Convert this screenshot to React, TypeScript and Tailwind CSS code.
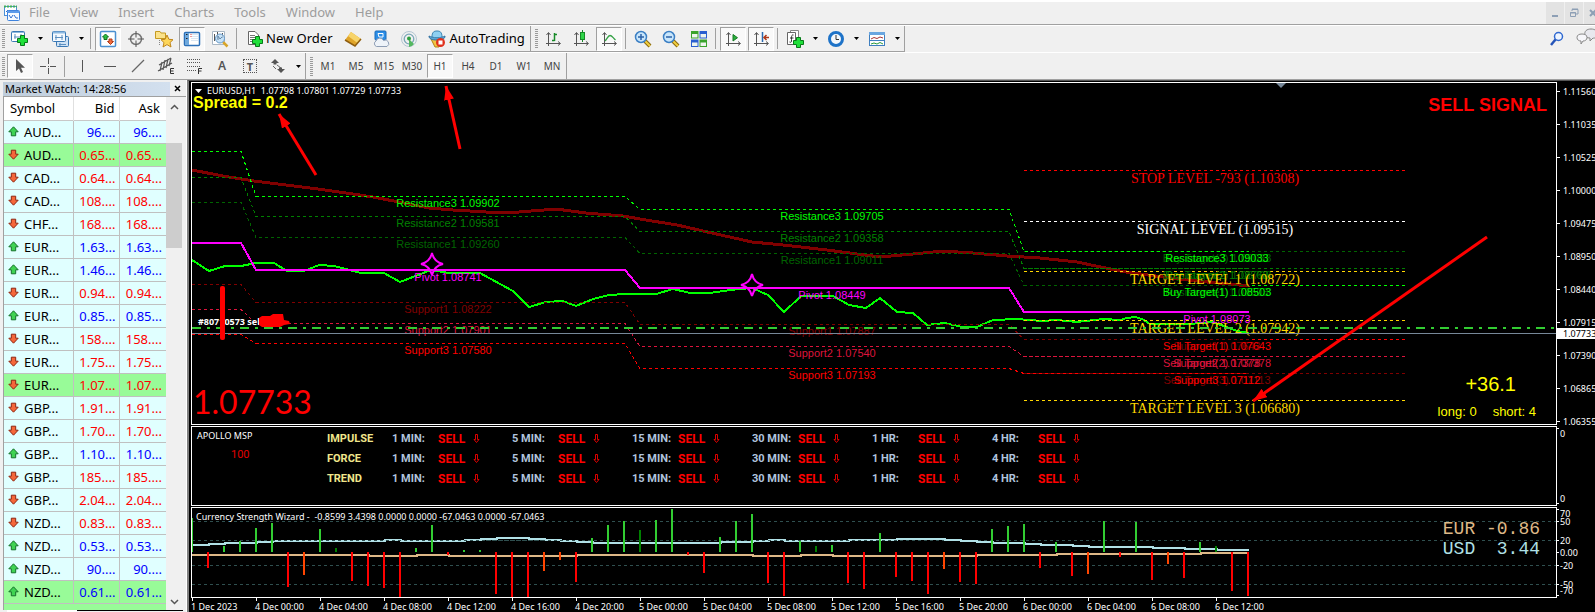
import type { ReactNode } from "react";

type Point = [number, number];

const menuItems = ["File", "View", "Insert", "Charts", "Tools", "Window", "Help"];
const timeframes = ["M1", "M5", "M15", "M30", "H1", "H4", "D1", "W1", "MN"];

type Quote = { symbol: string; bid: string; up?: boolean; marked?: boolean };

const quotes: Quote[] = [
  { symbol: "AUD...", bid: "96....", up: true },
  { symbol: "AUD...", bid: "0.65...", marked: true },
  { symbol: "CAD...", bid: "0.64..." },
  { symbol: "CAD...", bid: "108...." },
  { symbol: "CHF...", bid: "168...." },
  { symbol: "EUR...", bid: "1.63...", up: true },
  { symbol: "EUR...", bid: "1.46...", up: true },
  { symbol: "EUR...", bid: "0.94..." },
  { symbol: "EUR...", bid: "0.85...", up: true },
  { symbol: "EUR...", bid: "158...." },
  { symbol: "EUR...", bid: "1.75..." },
  { symbol: "EUR...", bid: "1.07...", marked: true },
  { symbol: "GBP...", bid: "1.91..." },
  { symbol: "GBP...", bid: "1.70..." },
  { symbol: "GBP...", bid: "1.10...", up: true },
  { symbol: "GBP...", bid: "185...." },
  { symbol: "GBP...", bid: "2.04..." },
  { symbol: "NZD...", bid: "0.83..." },
  { symbol: "NZD...", bid: "0.53...", up: true },
  { symbol: "NZD...", bid: "90....", up: true },
  { symbol: "NZD...", bid: "0.61...", up: true, marked: true },
];

const times = [
  "1 Dec 2023", "4 Dec 00:00", "4 Dec 04:00", "4 Dec 08:00", "4 Dec 12:00", "4 Dec 16:00",
  "4 Dec 20:00", "5 Dec 00:00", "5 Dec 04:00", "5 Dec 08:00", "5 Dec 12:00", "5 Dec 16:00",
  "5 Dec 20:00", "6 Dec 00:00", "6 Dec 04:00", "6 Dec 08:00", "6 Dec 12:00",
];

const prices = [
  "1.11560", "1.11035", "1.10525", "1.10000", "1.09475", "1.08950",
  "1.08440", "1.07915", "1.07390", "1.06865", "1.06355",
];

// y of each daily level for the four sessions on screen
const dailyLevels = [
  { color: "#800000", ys: [201, 219, 241, 256] },
  { color: "#dc143c", ys: [226, 240, 263, 273] },
  { color: "#ff0000", ys: [251, 260, 285, 290] },
  { color: "#006400", ys: [119, 154, 170, 202] },
  { color: "#008000", ys: [94, 133, 148, 185] },
  { color: "#00ff00", ys: [68, 113, 126, 168] },
];

const signalLevels = [
  { y: 87, color: "#ff0000" },
  { y: 138, color: "#ffffff" },
  { y: 168, color: "#006400" },
  { y: 185, color: "#008000" },
  { y: 188, color: "#ffd700" },
  { y: 202, color: "#00ff00" },
  { y: 237, color: "#ffd700" },
  { y: 256, color: "#ff0000" },
  { y: 273, color: "#dc143c" },
  { y: 290, color: "#800000" },
  { y: 317, color: "#ffd700" },
];

const levelLabels: Array<[number, number, string, string]> = [
  [256, 124, "Resistance3 1.09902", "#00ff00"],
  [256, 144, "Resistance2 1.09581", "#008000"],
  [256, 165, "Resistance1 1.09260", "#006400"],
  [256, 198, "Pivot 1.08741", "#ff00ff"],
  [256, 230, "Support1 1.08222", "#800000"],
  [256, 251, "Support2 1.07901", "#dc143c"],
  [256, 271, "Support3 1.07580", "#ff0000"],
  [640, 137, "Resistance3 1.09705", "#00ff00"],
  [640, 159, "Resistance2 1.09358", "#008000"],
  [640, 181, "Resistance1 1.09011", "#006400"],
  [640, 216, "Pivot 1.08449", "#ff00ff"],
  [640, 252, "Support1 1.07887", "#800000"],
  [640, 274, "Support2 1.07540", "#dc143c"],
  [640, 296, "Support3 1.07193", "#ff0000"],
  [1025, 179, "Buy Target(3) 1.09033", "#006400"],
  [1025, 179, "Resistance3 1.09033", "#00ff00"],
  [1025, 196, "Buy Target(2) 1.08768", "#006400"],
  [1025, 196, "Resistance2 1.08768", "#008000"],
  [1025, 213, "Resistance1 1.08503", "#006400"],
  [1025, 213, "Buy Target(1) 1.08503", "#00ff00"],
  [1025, 240, "Pivot 1.08073", "#ff00ff"],
  [1025, 267, "Support1 1.07643", "#800000"],
  [1025, 267, "Sell Target(1) 1.07643", "#ff0000"],
  [1025, 284, "Sell Target(2) 1.07378", "#dc143c"],
  [1025, 284, "Support2 1.07378", "#dc143c"],
  [1025, 301, "Sell Target(3) 1.07113", "#800000"],
  [1025, 301, "Support3 1.07112", "#ff0000"],
];

const serifLabels: Array<[number, string, string]> = [
  [100, "STOP LEVEL -793 (1.10308)", "#ff0000"],
  [151, "SIGNAL LEVEL (1.09515)", "#ffffff"],
  [201, "TARGET LEVEL 1 (1.08722)", "#ffd700"],
  [250, "TARGET LEVEL 2 (1.07942)", "#ffd700"],
  [330, "TARGET LEVEL 3 (1.06680)", "#ffd700"],
];

const slowAverage: Point[] = [
  [0, 87], [31, 93], [62, 98], [94, 102], [126, 106], [154, 110], [181, 114], [207, 119],
  [237, 125], [261, 127], [294, 129], [327, 129], [364, 126], [394, 130], [431, 133], [448, 136],
  [485, 142], [511, 148], [560, 159], [591, 162], [635, 167], [688, 174], [721, 171], [751, 168],
  [781, 170], [815, 173], [848, 175], [885, 179], [928, 188], [941, 190], [971, 194], [1005, 198],
  [1057, 203],
];

const fastLine: Point[] = [
  [0, 177], [17, 188], [33, 183], [49, 183], [64, 180], [82, 180], [95, 188], [112, 188],
  [127, 182], [142, 183], [169, 190], [192, 190], [208, 199], [239, 187], [257, 190], [288, 190],
  [321, 208], [337, 224], [354, 219], [371, 218], [384, 223], [401, 216], [417, 212], [434, 211],
  [464, 211], [481, 206], [498, 210], [518, 210], [538, 207], [560, 205], [576, 212], [592, 229],
  [609, 213], [641, 213], [657, 222], [674, 225], [688, 215], [705, 229], [721, 230], [735, 242],
  [753, 240], [770, 244], [785, 244], [801, 237], [825, 236], [850, 238], [865, 237], [885, 239],
  [911, 236], [928, 237], [935, 235], [943, 234], [950, 236], [958, 241], [998, 241], [1020, 239],
  [1032, 243], [1045, 248], [1057, 250],
];

const pivotLine: Point[] = [
  [0, 160], [49, 160], [64, 187], [433, 187], [448, 205], [817, 205], [832, 229], [1057, 229],
];

// [bar index, height, weak]
const upBars: Array<[number, number, boolean?]> = [
  [0, 34], [2, 6], [3, 11], [4, 24], [5, 29], [8, 23], [9, 4, true], [14, 4], [15, 27], [17, 2],
  [18, 2], [25, 14], [26, 27], [27, 31], [28, 22, true], [29, 32], [30, 43], [33, 15], [34, 31],
  [35, 38], [38, 11], [39, 6, true], [40, 7], [43, 19], [50, 23], [51, 26], [52, 28], [54, 10],
  [57, 31], [59, 30], [63, 10], [64, 6, true],
];

const downBars: Array<[number, number, boolean?]> = [
  [1, 16], [6, 35], [7, 23, true], [10, 29], [11, 34], [12, 36], [13, 45], [16, 3], [19, 42],
  [20, 45], [21, 45], [22, 19, true], [23, 8, true], [24, 30], [31, 3], [32, 21], [36, 31],
  [37, 44], [41, 31], [42, 37], [44, 25], [45, 29], [46, 42], [47, 17, true], [48, 30], [49, 32],
  [53, 16], [55, 24], [56, 22, true], [58, 5], [60, 28], [61, 12, true], [62, 26], [65, 39],
  [66, 44],
];

const usdSteps: Point[] = [
  [0, 37], [1, 36], [2, 35], [4, 34], [5, 33], [12, 32], [13, 33], [17, 32], [18, 31], [19, 30],
  [21, 31], [22, 32], [23, 33], [24, 34], [25, 35], [33, 34], [35, 33], [36, 32], [37, 33],
  [41, 32], [44, 31], [47, 32], [48, 33], [49, 34], [50, 35], [52, 36], [53, 37], [55, 38],
  [56, 39], [60, 40], [62, 41], [64, 42],
];

const eurSteps: Point[] = [
  [0, 47], [11, 48], [14, 47], [16, 48], [24, 47], [35, 48], [38, 47], [40, 48], [49, 47],
  [54, 46], [63, 45],
];

function toPoints(points: Point[]) {
  return points.map((p) => p.join(",")).join(" ");
}

function stepPath(steps: Point[]) {
  return steps
    .map(([bar, y], i) => `${i === 0 ? "M" : "V"}${i === 0 ? `${bar * 16},${y}` : y} H${(steps[i + 1]?.[0] ?? 66) * 16 + 1}`)
    .join(" ");
}

function Icon({ children, size = 18 }: { children: ReactNode; size?: number }) {
  return (
    <svg width={size} height={size} viewBox={`0 0 ${size} ${size}`} fill="none" className="shrink-0" aria-hidden="true">
      {children}
    </svg>
  );
}

function ToolButton({ label, pressed, children }: { label: string; pressed?: boolean; children: ReactNode }) {
  return (
    <button
      type="button"
      aria-label={label}
      aria-pressed={pressed}
      className={`mx-px flex h-6 w-[26px] shrink-0 items-center justify-center border ${
        pressed ? "border-t-[#a0a0a0] border-r-white border-b-white border-l-[#a0a0a0] bg-[#f9f9f9]" : "border-transparent"
      }`}
    >
      {children}
    </button>
  );
}

function DropArrow({ label }: { label: string }) {
  return (
    <button type="button" aria-label={label} className="flex h-6 w-[13px] shrink-0 items-center justify-center">
      <svg width="5" height="3" aria-hidden="true">
        <path d="M0 0H5L2.5 3Z" fill="#000" />
      </svg>
    </button>
  );
}

function Separator() {
  return <span className="mr-[3px] ml-[2px] h-[21px] w-px shrink-0 bg-[#a0a0a0]" />;
}

function Grip() {
  return (
    <svg width="3" height="19" className="mr-px ml-[2px] shrink-0" shapeRendering="crispEdges" aria-hidden="true">
      <path d="M1.5 0V19" stroke="#9a9a9a" strokeWidth="3" strokeDasharray="1 1" />
    </svg>
  );
}

function Plus({ x, y }: { x: number; y: number }) {
  return (
    <path
      transform={`translate(${x} ${y})`}
      d="M3.5 .5H7.5V3.5H10.5V7.5H7.5V10.5H3.5V7.5H.5V3.5H3.5Z"
      fill="#1fe03a"
      stroke="#067a18"
    />
  );
}

function Axes() {
  return <path d="M4.5 16V3M2.5 5L4.5 2.5L6.5 5M2 13.5H16M14 11.5L16.5 13.5L14 15.5" stroke="#555" />;
}

function Lens({ minus }: { minus?: boolean }) {
  return (
    <Icon>
      <path d="M11 11L16 16" stroke="#8a6a10" strokeWidth="4" />
      <path d="M11 11L16 16" stroke="#f3cf3f" strokeWidth="2" />
      <circle cx="7" cy="7" r="5.5" fill="#c9e6fb" stroke="#3b7fc4" strokeWidth="1.5" />
      <path d={minus ? "M4 7H10" : "M4 7H10M7 4V10"} stroke="#2b62a8" strokeWidth="1.5" />
    </Icon>
  );
}

function QuoteArrow({ up }: { up?: boolean }) {
  return (
    <svg width="11" height="11" viewBox="0 0 11 11" className="shrink-0" role="img" aria-label={up ? "up" : "down"}>
      {up ? (
        <path d="M5.5 .8L10.2 5.8H7.7V9.8H3.3V5.8H.8Z" fill="#3fd353" stroke="#14702a" />
      ) : (
        <path d="M5.5 10.2L.8 5.2H3.3V1.2H7.7V5.2H10.2Z" fill="#f5673a" stroke="#8e2510" />
      )}
    </svg>
  );
}

function MenuBar() {
  return (
    <header className="flex h-6 shrink-0 border-t-2 border-white">
      <div className="flex w-7 items-center justify-center pr-1">
        <Icon size={16}>
          <rect x=".5" y="1.5" width="12" height="9" fill="#fff" stroke="#4a8fd8" />
          <path d="M0 1.5H13" stroke="#43b058" strokeWidth="2" strokeDasharray="2 1" />
          <path d="M2 7L4 5L6 7L8 5L10 7" stroke="#2f6fd0" />
          <rect x="3.5" y="5.5" width="12" height="10" rx="1" fill="#f5faff" stroke="#3f83dd" />
          <path d="M4 7H15" stroke="#5c9bea" strokeWidth="2" />
          <path d="M5 10L7 13L9 10M10 10L12 13H14" stroke="#2f6fd0" />
        </Icon>
      </div>
      <nav className="flex flex-1 items-center gap-5 pl-px text-[13px] text-[#9d9d9d]">
        {menuItems.map((item) => (
          <button key={item} type="button">
            {item}
          </button>
        ))}
      </nav>
      <div className="flex gap-px text-[#8d9fb5]">
        <button type="button" aria-label="Minimize" className="flex w-[18px] items-center justify-center bg-[#e3e3e3]">
          <Icon size={10}>
            <path d="M2 8H8" stroke="currentColor" strokeWidth="2" />
          </Icon>
        </button>
        <button type="button" aria-label="Restore" className="flex w-[18px] items-center justify-center bg-[#e3e3e3]">
          <Icon size={10}>
            <path d="M3 3V1.5H9V6H7M3 1H9M1.5 4.5H6.5V8.5H1.5ZM1 5H7" stroke="currentColor" />
          </Icon>
        </button>
        <button type="button" aria-label="Close" className="flex w-[11px] items-center overflow-hidden bg-[#e3e3e3] pl-1">
          <Icon size={10}>
            <path d="M2 2L8 8M8 2L2 8" stroke="currentColor" strokeWidth="2" />
          </Icon>
        </button>
      </div>
    </header>
  );
}

function StandardToolbar() {
  return (
    <div className="flex h-[26px] shrink-0 items-center">
      <div className="flex h-full items-center border-r border-b border-[#a0a0a0]">
        <Grip />
        <ToolButton label="New chart">
          <Icon>
            <rect x=".5" y="1.5" width="13" height="10" rx="1" fill="#fff" stroke="#3a78b4" />
            <path d="M1 2.5H13" stroke="#8cb8e0" />
            <path d="M3 7H11M4 4V9M10 4V9" stroke="#5d8fc0" />
            <Plus x={6} y={5} />
          </Icon>
        </ToolButton>
        <DropArrow label="New chart options" />
        <ToolButton label="Profiles">
          <Icon>
            <rect x="4.5" y="6.5" width="12" height="10" rx="1" fill="#cfe2f4" stroke="#3a78b4" />
            <path d="M7 14.5H14M8 13V16" stroke="#5d8fc0" />
            <rect x=".5" y="1.5" width="13" height="10" rx="1" fill="#f4f9fe" stroke="#3a78b4" />
            <path d="M1 2.5H13" stroke="#8cb8e0" strokeWidth="2" />
            <path d="M3 7.5H11M4 5V10M10 5V10" stroke="#5d8fc0" />
          </Icon>
        </ToolButton>
        <DropArrow label="Profile list" />
        <Separator />
        <ToolButton label="Market Watch" pressed>
          <Icon>
            <rect x="1.5" y="1.5" width="15" height="15" rx="1" fill="#fff" stroke="#4a90d0" strokeWidth="1.5" />
            <path d="M6.500 4L9.500 7H8V9.500H5V7H3.500Z" fill="#2cc040" stroke="#11701f" />
            <path d="M11.500 14.500L8.500 11.500H10V9H13V11.500H14.500Z" fill="#f06a3c" stroke="#b03a18" />
          </Icon>
        </ToolButton>
        <ToolButton label="Data Window">
          <Icon>
            <circle cx="9" cy="9" r="5.5" stroke="#777" strokeWidth="1.5" />
            <path d="M9 1V7.5M9 10.5V17M1 9H7.5M10.500 9H17" stroke="#555" />
          </Icon>
        </ToolButton>
        <ToolButton label="Navigator">
          <Icon>
            <path d="M.5 1.5H5L6 3H10.5V8.5H.5Z" fill="#fbe28a" stroke="#c59a22" />
            <path d="M4.5 10V16" stroke="#888" strokeDasharray="1 1" />
            <path d="M12 5L13.9 9.3L18 9.700L15 12.600L16 17L12 14.600L8 17L9 12.600L6 9.700L10.100 9.300Z" fill="#fdd65a" stroke="#c0861a" />
          </Icon>
        </ToolButton>
        <ToolButton label="Terminal" pressed>
          <Icon>
            <rect x="1.5" y="2.5" width="15" height="13" rx="1" fill="#fff" stroke="#2b6fb8" strokeWidth="1.5" />
            <rect x="2" y="3" width="4" height="12" fill="#6fa8dc" />
            <path d="M3 4.500H4.500M3 8.500H4.500" stroke="#222" />
            <path d="M7.500 4.500H8.500M7.500 6.500H8.500" stroke="#d33" />
            <path d="M9 4.500H15M9 6.500H15M8 8.500H15M8 10.500H15" stroke="#d9e6f2" />
          </Icon>
        </ToolButton>
        <ToolButton label="Strategy Tester">
          <Icon>
            <path d="M1.500 1.500H13.500V14.500H1.500Z" fill="#fff" stroke="#a9b7c4" />
            <path d="M3.500 4V11M6.500 2V9M11.500 3V8" stroke="#555" />
            <path d="M12 12L16.500 16.500" stroke="#d8a52a" strokeWidth="2.500" />
            <circle cx="9" cy="8.500" r="4.500" fill="#b9dbf5" fillOpacity=".8" stroke="#6698c6" />
            <path d="M7 10V6L9 9L11 7" stroke="#6688a8" />
          </Icon>
        </ToolButton>
        <Separator />
        <button type="button" className="flex h-6 items-center gap-[3px] pr-1.5 pl-[7px] text-[13px] whitespace-nowrap text-black">
          <Icon size={16}>
            <path d="M1.500 .5H8L11.500 4V13.500H1.500Z" fill="#fff" stroke="#666" />
            <path d="M3 4.500H8M3 6.500H9M3 8.500H9M3 10.500H7" stroke="#777" />
            <Plus x={5} y={5} />
          </Icon>
          New Order
        </button>
        <ToolButton label="MetaEditor">
          <Icon>
            <path d="M1 10L7 2L17 9L11 16Z" fill="#e0a52a" />
            <path d="M7 2L17 9L13.500 13L4 6Z" fill="#f7d46a" />
            <path d="M1 10L11 16L17 9" stroke="#8f5e10" strokeWidth="1.500" />
          </Icon>
        </ToolButton>
        <ToolButton label="Cloud">
          <Icon>
            <rect x="3" y="1" width="11" height="9" rx="1" fill="#2a8ee8" stroke="#1a6ab8" />
            <path d="M6 3.500H11V7H7Z" stroke="#fff" />
            <path d="M4.500 16.500A3 3 0 0 1 4 11A4 4 0 0 1 11.500 10.500A3 3 0 0 1 15 16.500Z" fill="#eef3f9" stroke="#8d9db5" />
          </Icon>
        </ToolButton>
        <ToolButton label="Signals">
          <Icon>
            <circle cx="9" cy="9" r="7.500" stroke="#b4c6d2" />
            <circle cx="9" cy="9" r="4.800" stroke="#7aa6b8" strokeWidth="1.300" />
            <path d="M9 9V17A8 8 0 0 0 14 14Z" fill="#55b860" />
            <circle cx="9" cy="8.500" r="2" fill="#2fa040" />
          </Icon>
        </ToolButton>
        <button type="button" className="flex h-6 items-center gap-1 pr-[5px] pl-[5px] text-[13px] whitespace-nowrap text-black">
          <Icon>
            <path d="M3 9H14L11 17H7Z" fill="#f3c440" stroke="#b0831a" />
            <path d="M1 6C1 9 4 10 9 10S17 9 17 6C14 8 4 8 1 6Z" fill="#5fa8d8" stroke="#2f6fa0" />
            <path d="M4 7C4 2 6 1 9 1S14 2 14 7C11 8 7 8 4 7Z" fill="#8fd0f2" stroke="#3c86b4" />
            <circle cx="12.500" cy="12.500" r="4.500" fill="#e0301c" />
            <rect x="10.500" y="10.500" width="4" height="4" fill="#fff" />
          </Icon>
          AutoTrading
        </button>
      </div>
      <div className="flex h-full items-center border-r border-b border-[#a0a0a0] pl-0.5">
        <Grip />
        <ToolButton label="Bar chart">
          <Icon>
            <Axes />
            <path d="M10.500 3V11M10.500 4.500H13M8 10.500H10.500" stroke="#178a28" strokeWidth="1.500" />
          </Icon>
        </ToolButton>
        <ToolButton label="Candlesticks">
          <Icon>
            <Axes />
            <path d="M10.500 0V12" stroke="#178a28" />
            <rect x="8.500" y="2.500" width="4" height="7" fill="#2fd648" stroke="#178a28" />
          </Icon>
        </ToolButton>
        <ToolButton label="Line chart" pressed>
          <Icon>
            <Axes />
            <path d="M5 11C7 9 8 5.500 10 5.500S13 8 15.500 10" stroke="#36a246" strokeWidth="1.300" />
          </Icon>
        </ToolButton>
        <Separator />
        <ToolButton label="Zoom in">
          <Lens />
        </ToolButton>
        <ToolButton label="Zoom out">
          <Lens minus />
        </ToolButton>
        <ToolButton label="Tile windows">
          <Icon>
            <path d="M1 1H8.500V8.500H1ZM9.500 9.500H17V17H9.500Z" fill="#3aa32c" />
            <path d="M9.500 1H17V8.500H9.500ZM1 9.500H8.500V17H1Z" fill="#2a5fd0" />
            <path d="M2 4H7.500V7.500H2ZM10.500 4H16V7.500H10.500ZM2 12.500H7.500V16H2ZM10.500 12.500H16V16H10.500Z" fill="#eef5ee" />
          </Icon>
        </ToolButton>
        <Separator />
        <ToolButton label="Auto scroll" pressed>
          <Icon>
            <Axes />
            <path d="M9 4.500V11L13.500 7.700Z" fill="#2bb03c" stroke="#157a24" />
          </Icon>
        </ToolButton>
        <ToolButton label="Chart shift" pressed>
          <Icon>
            <Axes />
            <path d="M10.500 2V12" stroke="#2a6ab0" strokeWidth="1.500" />
            <path d="M17 7.500H12M14.500 5L12 7.500L14.500 10" stroke="#b03a1a" strokeWidth="1.500" />
          </Icon>
        </ToolButton>
        <Separator />
        <ToolButton label="Indicators">
          <Icon>
            <path d="M4.500 .5H12.500V12.500H4.500Z" fill="#fff" stroke="#888" />
            <path d="M1.500 2.500H9.500V14.500H1.500Z" fill="#fff" stroke="#666" />
            <path d="M7.500 5C5.500 4.500 5.500 6 5.500 11C5.500 12.500 4.500 12.500 3.500 12M4 8H7.500" stroke="#333" />
            <Plus x={7} y={7} />
          </Icon>
        </ToolButton>
        <DropArrow label="Indicator list" />
        <ToolButton label="Periods">
          <Icon>
            <circle cx="9" cy="9" r="6.500" fill="#f4f8fc" stroke="#1e73c8" strokeWidth="3" />
            <path d="M9 5V9.500H12" stroke="#333" />
          </Icon>
        </ToolButton>
        <DropArrow label="Period list" />
        <ToolButton label="Templates">
          <Icon>
            <rect x="1.500" y="2.500" width="15" height="13" fill="#fff" stroke="#3f7fc0" />
            <path d="M1 3.500H17" stroke="#6aa6e0" strokeWidth="3" />
            <path d="M3 9L6 7.500L9 8.500L12 7L15 8" stroke="#a33" />
            <path d="M1 10.500H17" stroke="#3f7fc0" />
            <path d="M3 14L6 13L9 14L12 12.500L15 14" stroke="#2a9a3a" />
          </Icon>
        </ToolButton>
        <DropArrow label="Template list" />
      </div>
      <div className="ml-auto flex items-center gap-3">
        <button type="button" aria-label="Search">
          <Icon size={16}>
            <circle cx="10.500" cy="5.500" r="4" fill="#eef5ff" stroke="#2f68d0" strokeWidth="1.500" />
            <path d="M7.500 8.500L3 14" stroke="#2554b8" strokeWidth="2.500" />
          </Icon>
        </button>
        <button type="button" aria-label="Chat" className="w-[19px] overflow-hidden">
          <Icon size={22}>
            <path d="M9 7C8 3 11 1 15 1S22 3 21 7S17 10 17 10L14 13V10C11 10 9 9 9 7Z" fill="#e8e8ee" stroke="#888" />
            <path d="M1 9.500C1 7 3 6 6 6S11 7 11 9.500S9 13 7 13L5 16V13C3 13 1 12 1 9.500Z" fill="#f6f6fa" stroke="#888" />
          </Icon>
        </button>
      </div>
    </div>
  );
}

function LineToolbar() {
  return (
    <div className="flex h-[27px] shrink-0 items-center border-t border-white">
      <div className="flex h-full items-center border-r border-[#a0a0a0]">
        <Grip />
        <ToolButton label="Cursor" pressed>
          <Icon>
            <path d="M5 2V14L8 11.500L10 16L12 15L10 10.700H14Z" fill="#555" />
          </Icon>
        </ToolButton>
        <ToolButton label="Crosshair">
          <Icon>
            <path d="M9.500 1V7M9.500 11V17M1 9.500H7M11 9.500H17M9 9.500H10" stroke="#555" />
          </Icon>
        </ToolButton>
        <Separator />
        <ToolButton label="Vertical line">
          <Icon>
            <path d="M9.500 3V15" stroke="#555" />
          </Icon>
        </ToolButton>
        <ToolButton label="Horizontal line">
          <Icon>
            <path d="M3 9.500H15" stroke="#555" />
          </Icon>
        </ToolButton>
        <ToolButton label="Trendline">
          <Icon>
            <path d="M3 15L15 3" stroke="#666" strokeWidth="1.200" />
          </Icon>
        </ToolButton>
        <ToolButton label="Equidistant channel">
          <Icon>
            <path d="M2 8L14 1M1 14L15 6M5 5L3 14M8 3L6 13M11 2L9 11M14 1L12 9" stroke="#555" strokeWidth="1.200" />
            <path d="M17 11.500H13.500V16.500H17M13.500 14H16.500" stroke="#333" />
          </Icon>
        </ToolButton>
        <ToolButton label="Fibonacci">
          <Icon>
            <path d="M2 2.500H16M2 5.500H16M2 9.500H16M2 13.500H11" stroke="#555" strokeDasharray="1 1" />
            <path d="M17 11.500H13.500V17M13.500 14H16.500" stroke="#333" />
          </Icon>
        </ToolButton>
        <ToolButton label="Text">
          <span className="text-[12px] leading-none font-semibold text-[#555]">A</span>
        </ToolButton>
        <ToolButton label="Text label">
          <span className="flex h-[14px] w-[14px] items-center justify-center border border-dotted border-[#555] text-[11px] leading-none font-bold text-[#555]">
            T
          </span>
        </ToolButton>
        <ToolButton label="Arrows">
          <Icon>
            <path d="M2 6L6 2L10 6H7.500V7.500H4.500V6Z M8 12H10V10.500H13V12H16L12 16Z" fill="#555" />
            <path d="M4 9L7 12M8 8L12 11" stroke="#666" />
          </Icon>
        </ToolButton>
        <DropArrow label="Arrow list" />
      </div>
      <div className="flex h-full items-center border-r border-[#a0a0a0] pl-0.5">
        <Grip />
        <div className="flex text-[10px] text-[#444]">
          {timeframes.map((tf) => (
            <ToolButton key={tf} label={tf} pressed={tf === "H1"}>
              {tf}
            </ToolButton>
          ))}
        </div>
      </div>
    </div>
  );
}

function MarketWatch() {
  return (
    <aside className="flex w-[187px] shrink-0 flex-col border-r border-white bg-[#f0f0f0] pl-[3px]">
      <div className="mt-px flex h-[15px] shrink-0 items-center">
        <h2 className="h-[14px] w-[167px] bg-linear-to-r from-[#bfcddb] to-[#d3e0ef] pl-0.5 text-[11px] leading-[14px] text-black">
          Market Watch: 14:28:56
        </h2>
        <button type="button" aria-label="Close Market Watch" className="ml-1">
          <Icon size={8}>
            <path d="M1 1L6 6M6 1L1 6" stroke="#000" strokeWidth="1.500" />
          </Icon>
        </button>
      </div>
      <div className="flex min-h-0 flex-1 border-t border-l border-[#a0a0a0]">
        <div className="w-[162px] overflow-hidden bg-[#98fb98]">
          <table className="w-full table-fixed border-collapse text-[13px]">
            <thead>
              <tr className="h-[23px] border-b border-[#c8c8c8] bg-white text-black">
                <th className="w-[69px] border-r border-[#e0e0e0] p-0 pl-[6px] text-left font-normal">Symbol</th>
                <th className="w-[46px] border-r border-[#e0e0e0] p-0 pr-1 text-right font-normal">Bid</th>
                <th className="p-0 pr-[6px] text-right font-normal">Ask</th>
              </tr>
            </thead>
            <tbody>
              {quotes.map((quote, i) => (
                <tr key={i} className={`h-[23px] border-b border-[#c0c0c0] ${quote.marked ? "bg-[#98fb98]" : "bg-[#e0ffff]"}`}>
                  <td className="border-r border-[#c0c0c0] p-0 pl-1 text-black">
                    <span className="flex items-center gap-[5px] leading-[22px]">
                      <QuoteArrow up={quote.up} />
                      {quote.symbol}
                    </span>
                  </td>
                  <td className={`border-r border-[#c0c0c0] p-0 pr-[3px] text-right leading-[22px] ${quote.up ? "text-[#0000ff]" : "text-[#ff0000]"}`}>
                    {quote.bid}
                  </td>
                  <td className={`p-0 pr-1 text-right leading-[22px] ${quote.up ? "text-[#0000ff]" : "text-[#ff0000]"}`}>{quote.bid}</td>
                </tr>
              ))}
            </tbody>
          </table>
        </div>
        <div className="flex w-4 flex-col items-center">
          <svg width="9" height="46" className="shrink-0" aria-hidden="true">
            <path d="M1 12L4.500 8.500L8 12" stroke="#555" strokeWidth="1.500" fill="none" />
          </svg>
          <div className="h-[105px] w-full shrink-0 bg-[#cdcdcd]" />
          <svg width="9" height="14" className="mt-auto shrink-0" aria-hidden="true">
            <path d="M1 4L4.500 7.500L8 4" stroke="#555" strokeWidth="1.500" fill="none" />
          </svg>
        </div>
      </div>
      <div className="flex h-[2px] shrink-0">
        <div className="ml-1 w-[70px] bg-white" />
        <div className="mr-[3px] flex-1 border-t border-black" />
      </div>
    </aside>
  );
}

function Star({ x, y }: { x: number; y: number }) {
  return (
    <path
      transform={`translate(${x} ${y})`}
      d="M0 -11Q2 -2 11 0Q2 2 0 11Q-2 2 -11 0Q-2 -2 0 -11Z"
      fill="none"
      stroke="#ff00ff"
      strokeWidth="2"
    />
  );
}

function PriceChart() {
  return (
    <section className="flex min-h-0 flex-1" aria-label="EURUSD,H1">
      <div className="relative min-w-0 flex-1 overflow-hidden border border-white">
        <svg width="100%" height="341" className="block">
          <defs>
            <marker id="head" markerWidth="16" markerHeight="12" refX="14" refY="5" orient="auto" markerUnits="userSpaceOnUse">
              <path d="M0 0L14 5L0 10Z" fill="#ff0000" />
            </marker>
          </defs>
          <path d="M3 6H10L6.500 10Z" fill="#fff" />
          <path d="M1084 0H1094L1089 5Z" fill="#778899" />
          <g fill="none" shapeRendering="crispEdges">
            <polyline points={toPoints(slowAverage)} stroke="#800000" strokeWidth="3" />
            <polyline points={toPoints(fastLine)} stroke="#00ff00" strokeWidth="2" />
            {signalLevels.map(({ y, color }) => (
              <path key={y} d={`M832 ${y + 0.5}H1213`} stroke={color} strokeDasharray="3 3" />
            ))}
            {dailyLevels.map(({ color, ys: [a, b, c, d] }) => (
              <path
                key={color}
                d={`M0 ${a + 0.5}H49L64 ${b + 0.5}H433L448 ${c + 0.5}H817L832 ${d + 0.5}H1057`}
                stroke={color}
                strokeDasharray="3 3"
              />
            ))}
            <polyline points={toPoints(pivotLine)} stroke="#ff00ff" strokeWidth="2" />
          </g>
          <g fontFamily="Liberation Sans, sans-serif" fontSize="11" textAnchor="middle">
            {levelLabels.map(([x, y, text, color]) => (
              <text key={text + x} x={x} y={y} fill={color}>
                {text}
              </text>
            ))}
          </g>
          <g fontFamily="Liberation Serif, serif" fontSize="14" textAnchor="middle">
            {serifLabels.map(([y, text, color]) => (
              <text key={text} x="1023" y={y} fill={color}>
                {text}
              </text>
            ))}
          </g>
          <g shapeRendering="crispEdges">
            <path d="M0 245H3000" stroke="#32cd32" strokeWidth="2" strokeDasharray="9 6 3 6" />
            <path d="M0 250.500H3000" stroke="#778899" />
          </g>
          <Star x={240} y={181} />
          <Star x={560} y={202} />
          <text x="6" y="242" fill="#fff" fontSize="9" fontWeight="700" fontFamily="Noto Sans, sans-serif">
            #80710573 sell
          </text>
          <rect x="28" y="203" width="5" height="54" rx="2" fill="#ff0000" />
          <path d="M67 235L70 233H78L81 231H91L92 237L97 238L98 241L92 242L88 244H70L67 242Z" fill="#ff0000" />
          <g stroke="#ff0000" strokeWidth="3">
            <path d="M124 92L87 31" markerEnd="url(#head)" />
            <path d="M268 66L254 3" markerEnd="url(#head)" />
            <path d="M1295 154L1061 318" markerEnd="url(#head)" />
          </g>
        </svg>
        <h1 className="absolute top-px left-[15px] text-[9px] leading-[14px] whitespace-pre text-white">
          EURUSD,H1  1.07798 1.07801 1.07729 1.07733
        </h1>
        <p className="absolute top-[10px] left-px font-['Liberation_Sans',sans-serif] text-base leading-[20px] font-bold text-[#ffff00]">
          Spread = 0.2
        </p>
        <p className="absolute top-3 right-[9px] font-['Liberation_Sans',sans-serif] text-lg leading-5 font-black text-[#ff0000]">
          SELL SIGNAL
        </p>
        <p className="absolute bottom-[2px] left-px font-['Lato',sans-serif] text-[32px] leading-10 text-[#ff0000]">1.07733</p>
        <div className="absolute right-5 bottom-1 font-['Liberation_Sans',sans-serif] text-[13px] leading-4 text-[#ffff00]">
          <p className="mb-2 pr-5 text-right text-xl leading-6">+36.1</p>
          <p className="flex gap-4">
            <span>long: 0</span>
            <span>short: 4</span>
          </p>
        </div>
      </div>
      <svg width="38" height="343" className="shrink-0 overflow-visible" fontFamily="Noto Sans, sans-serif" fontSize="9" fill="#fff">
        {prices.map((price, i) => (
          <g key={price}>
            <path d={`M0 ${9.5 + i * 33}H3`} stroke="#fff" />
            <text x="6" y={13 + i * 33}>
              {price}
            </text>
          </g>
        ))}
        <rect y="246" width="38" height="11" />
        <text x="6" y="255" fill="#000">
          1.07733
        </text>
      </svg>
    </section>
  );
}

function SignalPanel() {
  return (
    <section className="flex h-20 shrink-0" aria-label="APOLLO MSP">
      <div className="flex min-w-0 flex-1 overflow-hidden border border-white">
        <div className="w-[135px] shrink-0 pl-[5px]">
          <h2 className="text-[9px] leading-[18px] text-white">APOLLO MSP</h2>
          <p className="pl-[34px] font-['Roboto',sans-serif] text-[11px] leading-[20px] text-[#e00000]">100</p>
        </div>
        <table className="mt-px h-[60px] table-fixed border-collapse self-start font-['Roboto',sans-serif] text-[11px] font-bold">
          <tbody>
            {["IMPULSE", "FORCE", "TREND"].map((name) => (
              <tr key={name} className="h-5">
                <th className="w-[65px] p-0 pt-0.5 text-left leading-4 font-bold text-[#f0e68c]">{name}</th>
                {["1 MIN:", "5 MIN:", "15 MIN:", "30 MIN:", "1 HR:", "4 HR:"].map((period) => (
                  <td key={period} className="w-[120px] p-0 pt-0.5">
                    <span className="flex items-center leading-4">
                      <span className="w-[46px] text-[#b0c4de]">{period}</span>
                      <span className="w-[35px] text-[12px] text-[#ff0000]">SELL</span>
                      <svg width="7" height="10" viewBox="0 0 7 10" aria-hidden="true">
                        <path d="M2.500 .5H4.500V5.500H6L3.500 8.500L1 5.500H2.500Z" fill="none" stroke="#e00000" />
                      </svg>
                    </span>
                  </td>
                ))}
              </tr>
            ))}
          </tbody>
        </table>
      </div>
      <svg width="38" height="80" className="shrink-0" fontFamily="Noto Sans, sans-serif" fontSize="9" fill="#fff">
        <path d="M0 2.500H2M0 77.500H2" stroke="#fff" />
        <text x="3" y="11">0</text>
        <text x="3" y="76">0</text>
      </svg>
    </section>
  );
}

function StrengthPanel() {
  return (
    <section className="flex h-[91px] shrink-0" aria-label="Currency Strength Wizard">
      <div className="relative min-w-0 flex-1 overflow-hidden border border-white">
        <svg width="100%" height="89" className="block" shapeRendering="crispEdges">
          {[13, 32, 57, 76].map((y) => (
            <path key={y} d={`M0 ${y + 0.5}H3000`} stroke="#2f4f4f" strokeDasharray="3 3" />
          ))}
          <path d={stepPath(usdSteps)} fill="none" stroke="#b0e0e6" strokeWidth="2" />
          <path d={stepPath(eurSteps)} fill="none" stroke="#deb887" strokeWidth="2" />
          <path d="M80 32.500H384M528 32.500H740" stroke="#2f4f4f" strokeDasharray="3 3" />
          {upBars.map(([bar, height, weak]) => (
            <rect key={bar} x={bar * 16 - 1} y={44 - height} width="2" height={height} fill={weak ? "#008000" : "#32cd32"} />
          ))}
          {downBars.map(([bar, height, weak]) => (
            <rect key={bar} x={bar * 16 - 1} y="44" width="2" height={height} fill={weak ? "#ff4500" : "#ff0000"} />
          ))}
        </svg>
        <h2 className="absolute top-0.5 left-1 text-[9px] leading-[14px] whitespace-pre text-white">
          Currency Strength Wizard -  -0.8599 3.4398 0.0000 0.0000 -67.0463 0.0000 -67.0463
        </h2>
        <div className="absolute top-[11px] right-4 text-right font-['Liberation_Mono',monospace] text-lg leading-5 whitespace-pre">
          <p className="text-[#deb887]">EUR -0.86</p>
          <p className="text-[#b0e0e6]">USD  3.44</p>
        </div>
      </div>
      <svg width="38" height="91" className="shrink-0" fontFamily="Noto Sans, sans-serif" fontSize="9" fill="#fff">
        <path d="M0 2.500H2M0 14.500H2M0 33.500H2M0 45.500H2M0 58.500H2M0 77.500H2M0 88.500H2" stroke="#fff" />
        <text x="3" y="10">70</text>
        <text x="3" y="18">50</text>
        <text x="3" y="37">20</text>
        <text x="3" y="49">0.00</text>
        <text x="3" y="62">-20</text>
        <text x="3" y="81">-50</text>
        <text x="3" y="87">-70</text>
      </svg>
    </section>
  );
}

function TimeAxis() {
  return (
    <div className="-mt-px flex h-[14px] shrink-0 overflow-hidden">
      {times.map((time) => (
        <div key={time} className="relative w-16 shrink-0 text-[9px] leading-[17px] whitespace-nowrap text-white">
          <span className="absolute top-0 left-px h-[3px] w-px bg-white" />
          {time}
        </div>
      ))}
    </div>
  );
}

export default function App() {
  return (
    <div className="flex h-screen flex-col overflow-hidden bg-[#f0f0f0] font-['Noto_Sans',sans-serif]">
      <MenuBar />
      <div className="h-px shrink-0 bg-[#a0a0a0]" />
      <div className="h-px shrink-0 bg-white" />
      <StandardToolbar />
      <LineToolbar />
      <main className="flex min-h-0 flex-1 border-t border-[#a0a0a0]">
        <MarketWatch />
        <div className="flex min-w-0 flex-1 flex-col gap-px border-t border-l-2 border-t-[#555] border-l-[#808080] bg-black pt-px pl-[2px]">
          <PriceChart />
          <SignalPanel />
          <StrengthPanel />
          <TimeAxis />
        </div>
      </main>
    </div>
  );
}
